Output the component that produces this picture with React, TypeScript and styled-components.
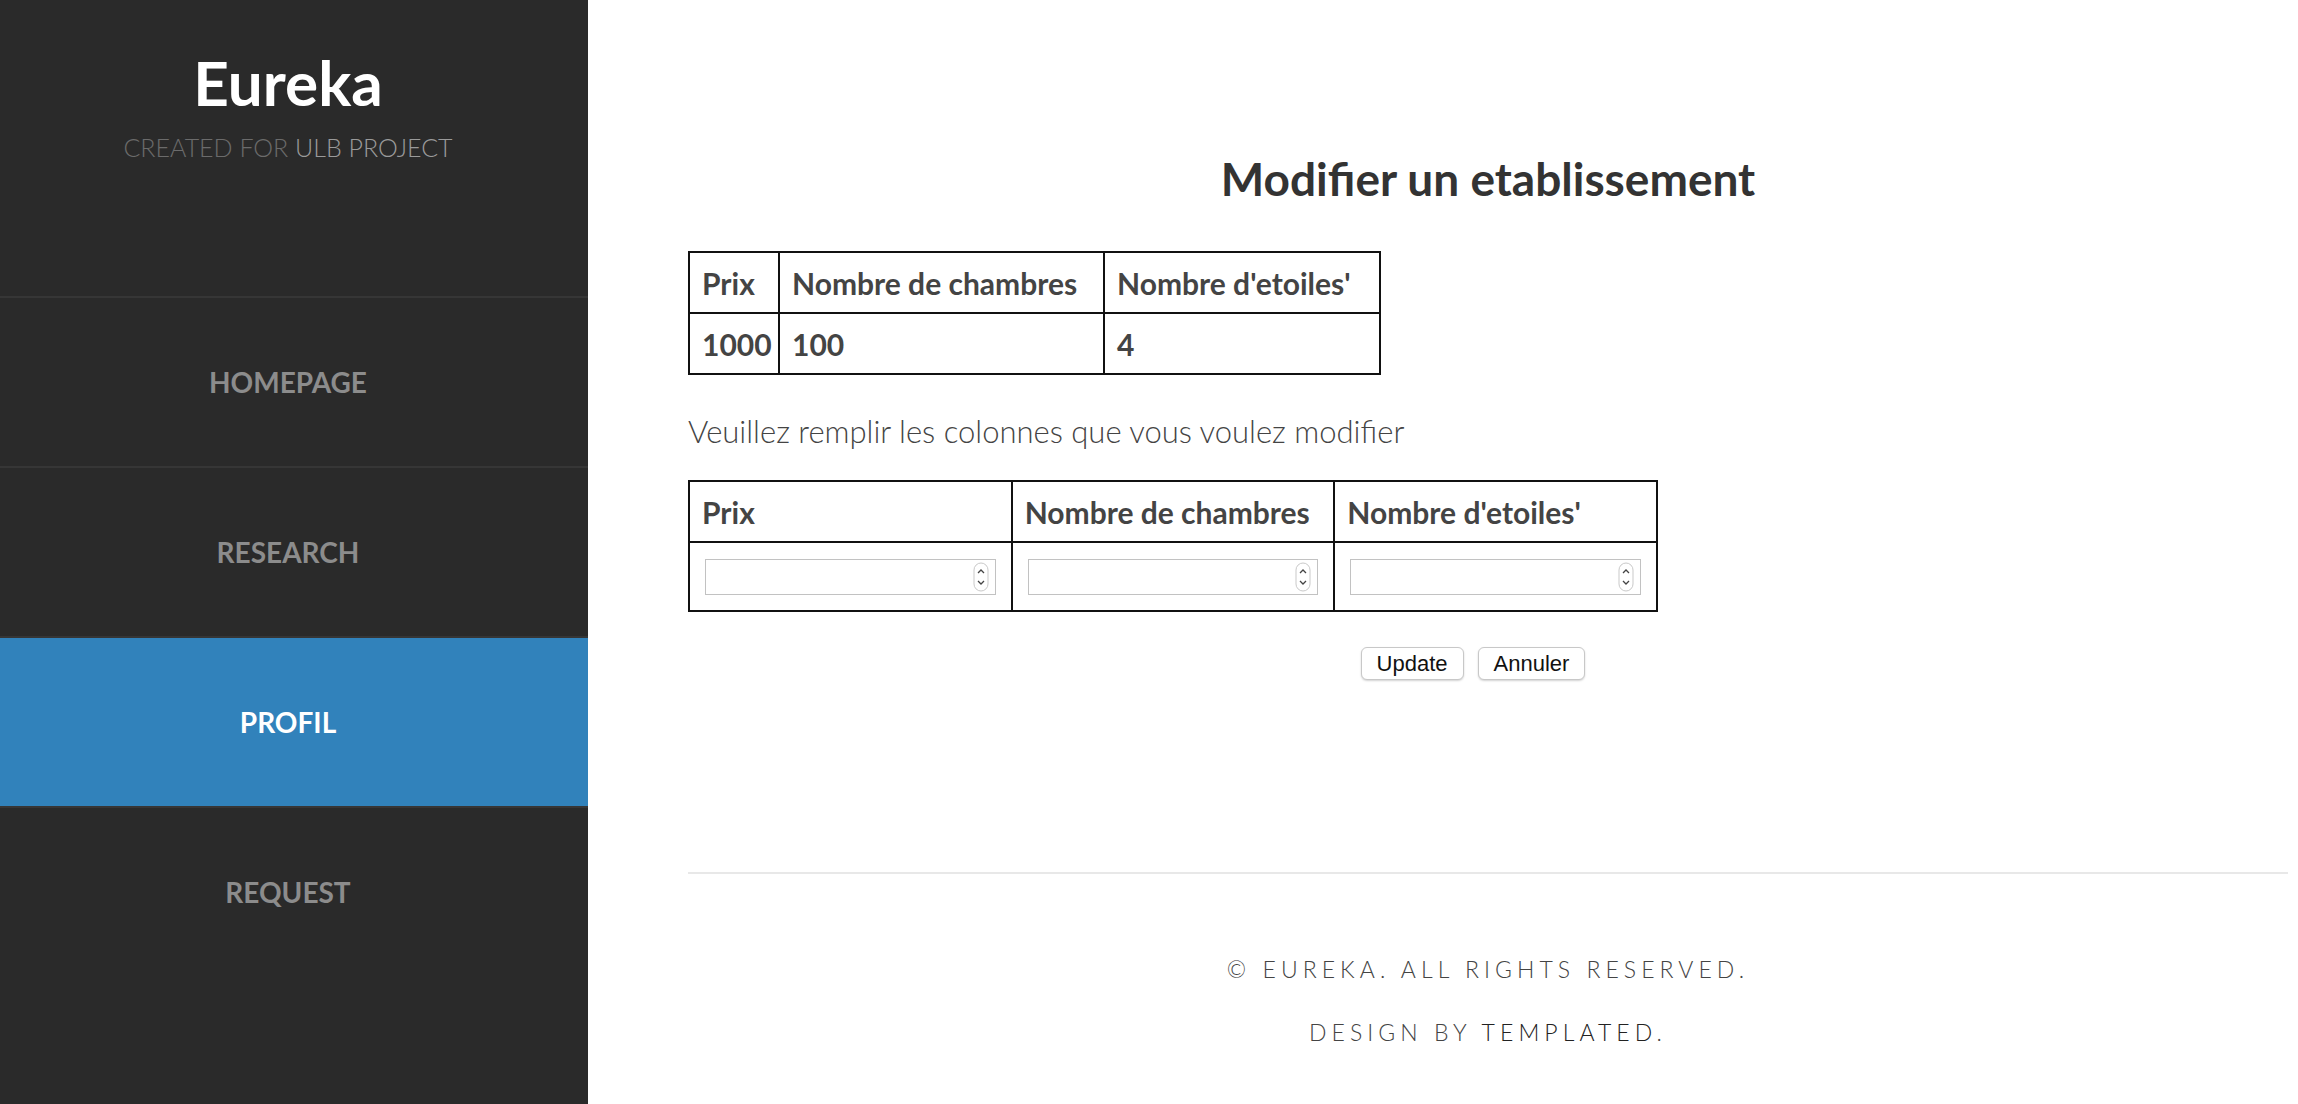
import React from 'react';
import styled, { createGlobalStyle } from 'styled-components';

const GlobalStyle = createGlobalStyle`
  html, body {
    margin: 0;
    padding: 0;
    height: 100%;
  }
  body {
    background: #fff;
    font-family: Lato, "Liberation Sans", sans-serif;
    overflow: hidden;
  }
  * {
    box-sizing: border-box;
  }
`;

const navItems = ['Homepage', 'Research', 'Profil', 'Request'];
const columns = ['Prix', 'Nombre de chambres', "Nombre d'etoiles'"];
const current = ['1000', '100', '4'];

const Spinner = () => (
  <svg width="16" height="30" viewBox="0 0 16 30">
    <rect x="1" y="1" width="14" height="28" rx="7" fill="#fff" stroke="#c9c9c9" />
    <path d="M5 11 L8 8 L11 11" fill="none" stroke="#444" strokeWidth="1.3" />
    <path d="M5 19 L8 22 L11 19" fill="none" stroke="#444" strokeWidth="1.3" />
  </svg>
);

const App = () => {
  return (
    <>
      <GlobalStyle />
      <Page>
        <Sidebar>
          <Brand>
            <Logo>Eureka</Logo>
            <Tagline>
              Created for <strong>ULB Project</strong>
            </Tagline>
          </Brand>
          <Nav>
            {navItems.map((item) => (
              <NavItem key={item} $active={item === 'Profil'}>
                {item}
              </NavItem>
            ))}
          </Nav>
        </Sidebar>

        <Main>
          <Title>Modifier un etablissement</Title>

          <InfoTable>
            <colgroup>
              <col style={{ width: 90 }} />
              <col style={{ width: 325 }} />
              <col style={{ width: 276 }} />
            </colgroup>
            <tbody>
              <tr>
                {columns.map((c) => (
                  <Cell key={c}>{c}</Cell>
                ))}
              </tr>
              <tr>
                {current.map((v, i) => (
                  <Cell key={i}>{v}</Cell>
                ))}
              </tr>
            </tbody>
          </InfoTable>

          <Hint>Veuillez remplir les colonnes que vous voulez modifier</Hint>

          <EditTable>
            <tbody>
              <tr>
                {columns.map((c) => (
                  <HeadCell key={c}>{c}</HeadCell>
                ))}
              </tr>
              <tr>
                {columns.map((c) => (
                  <InputCell key={c}>
                    <NumberBox>
                      <NumberInput type="text" />
                      <Spinner />
                    </NumberBox>
                  </InputCell>
                ))}
              </tr>
            </tbody>
          </EditTable>

          <ButtonRow>
            <Button>Update</Button>
            <Button>Annuler</Button>
          </ButtonRow>

          <Footer>
            <FooterLine>&copy; Eureka. All rights reserved.</FooterLine>
            <FooterLine>
              Design by <strong>Templated</strong>.
            </FooterLine>
          </Footer>
        </Main>
      </Page>
    </>
  );
};

export default App;

const Page = styled.div`
  display: flex;
  height: 100vh;
`;

const Sidebar = styled.aside`
  width: 588px;
  flex-shrink: 0;
  background: #2a2a2a;
  display: flex;
  flex-direction: column;
`;

const Brand = styled.header`
  height: 296px;
  padding: 51px 12px 0 0;
  text-align: center;
`;

const Logo = styled.h1`
  margin: 0;
  font-size: 62px;
  line-height: 62px;
  font-weight: 700;
  color: #fff;
`;

const Tagline = styled.p`
  margin: 22px 0 0;
  font-size: 25px;
  line-height: 25px;
  font-weight: 300;
  text-transform: uppercase;
  color: #6b6b6b;
  strong {
    font-weight: 300;
    color: #9a9a9a;
  }
`;

const Nav = styled.nav`
  display: flex;
  flex-direction: column;
`;

const NavItem = styled.a<{ $active?: boolean }>`
  height: 170px;
  display: flex;
  align-items: center;
  justify-content: center;
  padding-right: 12px;
  border-top: 2px solid #363636;
  background: ${(p) => (p.$active ? '#3182bb' : 'transparent')};
  color: ${(p) => (p.$active ? '#fff' : '#8c8c8c')};
  font-size: 28px;
  font-weight: 700;
  text-transform: uppercase;
  text-decoration: none;
`;

const Main = styled.main`
  flex: 1;
  padding: 0 10px 0 100px;
  color: #444;
`;

const Title = styled.h2`
  margin: 149px 0 42px;
  font-size: 46px;
  line-height: 60px;
  font-weight: 700;
  color: #333;
  text-align: center;
`;

const InfoTable = styled.table`
  border-collapse: collapse;
  table-layout: fixed;
  width: 691px;
  border: 2px solid #111;
`;

const Cell = styled.td`
  height: 61px;
  padding: 0 0 0 12px;
  border: 2px solid #111;
  font-size: 30px;
  font-weight: 700;
  color: #444;
  white-space: nowrap;
  overflow: hidden;
`;

const Hint = styled.p`
  margin: 36px 0 29px;
  font-size: 31px;
  line-height: 40px;
  font-weight: 300;
  color: #444;
`;

const EditTable = styled.table`
  border-collapse: collapse;
  table-layout: fixed;
  width: 970px;
  border: 2px solid #111;
`;

const HeadCell = styled.td`
  height: 61px;
  padding: 0 0 0 12px;
  border: 2px solid #111;
  font-size: 30px;
  font-weight: 700;
  color: #444;
  white-space: nowrap;
`;

const InputCell = styled.td`
  height: 69px;
  padding: 0 15px;
  border: 2px solid #111;
`;

const NumberBox = styled.div`
  display: flex;
  align-items: center;
  height: 36px;
  padding-right: 6px;
  border: 1px solid #c2c2c2;
  background: #fff;
`;

const NumberInput = styled.input`
  flex: 1;
  min-width: 0;
  height: 100%;
  border: none;
  outline: none;
  background: transparent;
  font-size: 20px;
`;

const ButtonRow = styled.div`
  display: flex;
  justify-content: center;
  gap: 14px;
  margin-top: 35px;
  padding-right: 30px;
`;

const Button = styled.button`
  height: 33px;
  padding: 0 15px;
  background: #fff;
  border: 1px solid #c8c8c8;
  border-radius: 6px;
  box-shadow: 0 1px 2px rgba(0, 0, 0, 0.18);
  font-family: "Liberation Sans", Arial, sans-serif;
  font-size: 22px;
  color: #111;
`;

const Footer = styled.footer`
  margin-top: 192px;
  border-top: 2px solid #e8e8e8;
  padding-top: 82px;
  text-align: center;
`;

const FooterLine = styled.p`
  margin: 0 0 36px;
  font-size: 23px;
  line-height: 27px;
  font-weight: 300;
  letter-spacing: 0.22em;
  text-transform: uppercase;
  color: #444;
  strong {
    font-weight: 300;
    color: #222;
  }
`;
